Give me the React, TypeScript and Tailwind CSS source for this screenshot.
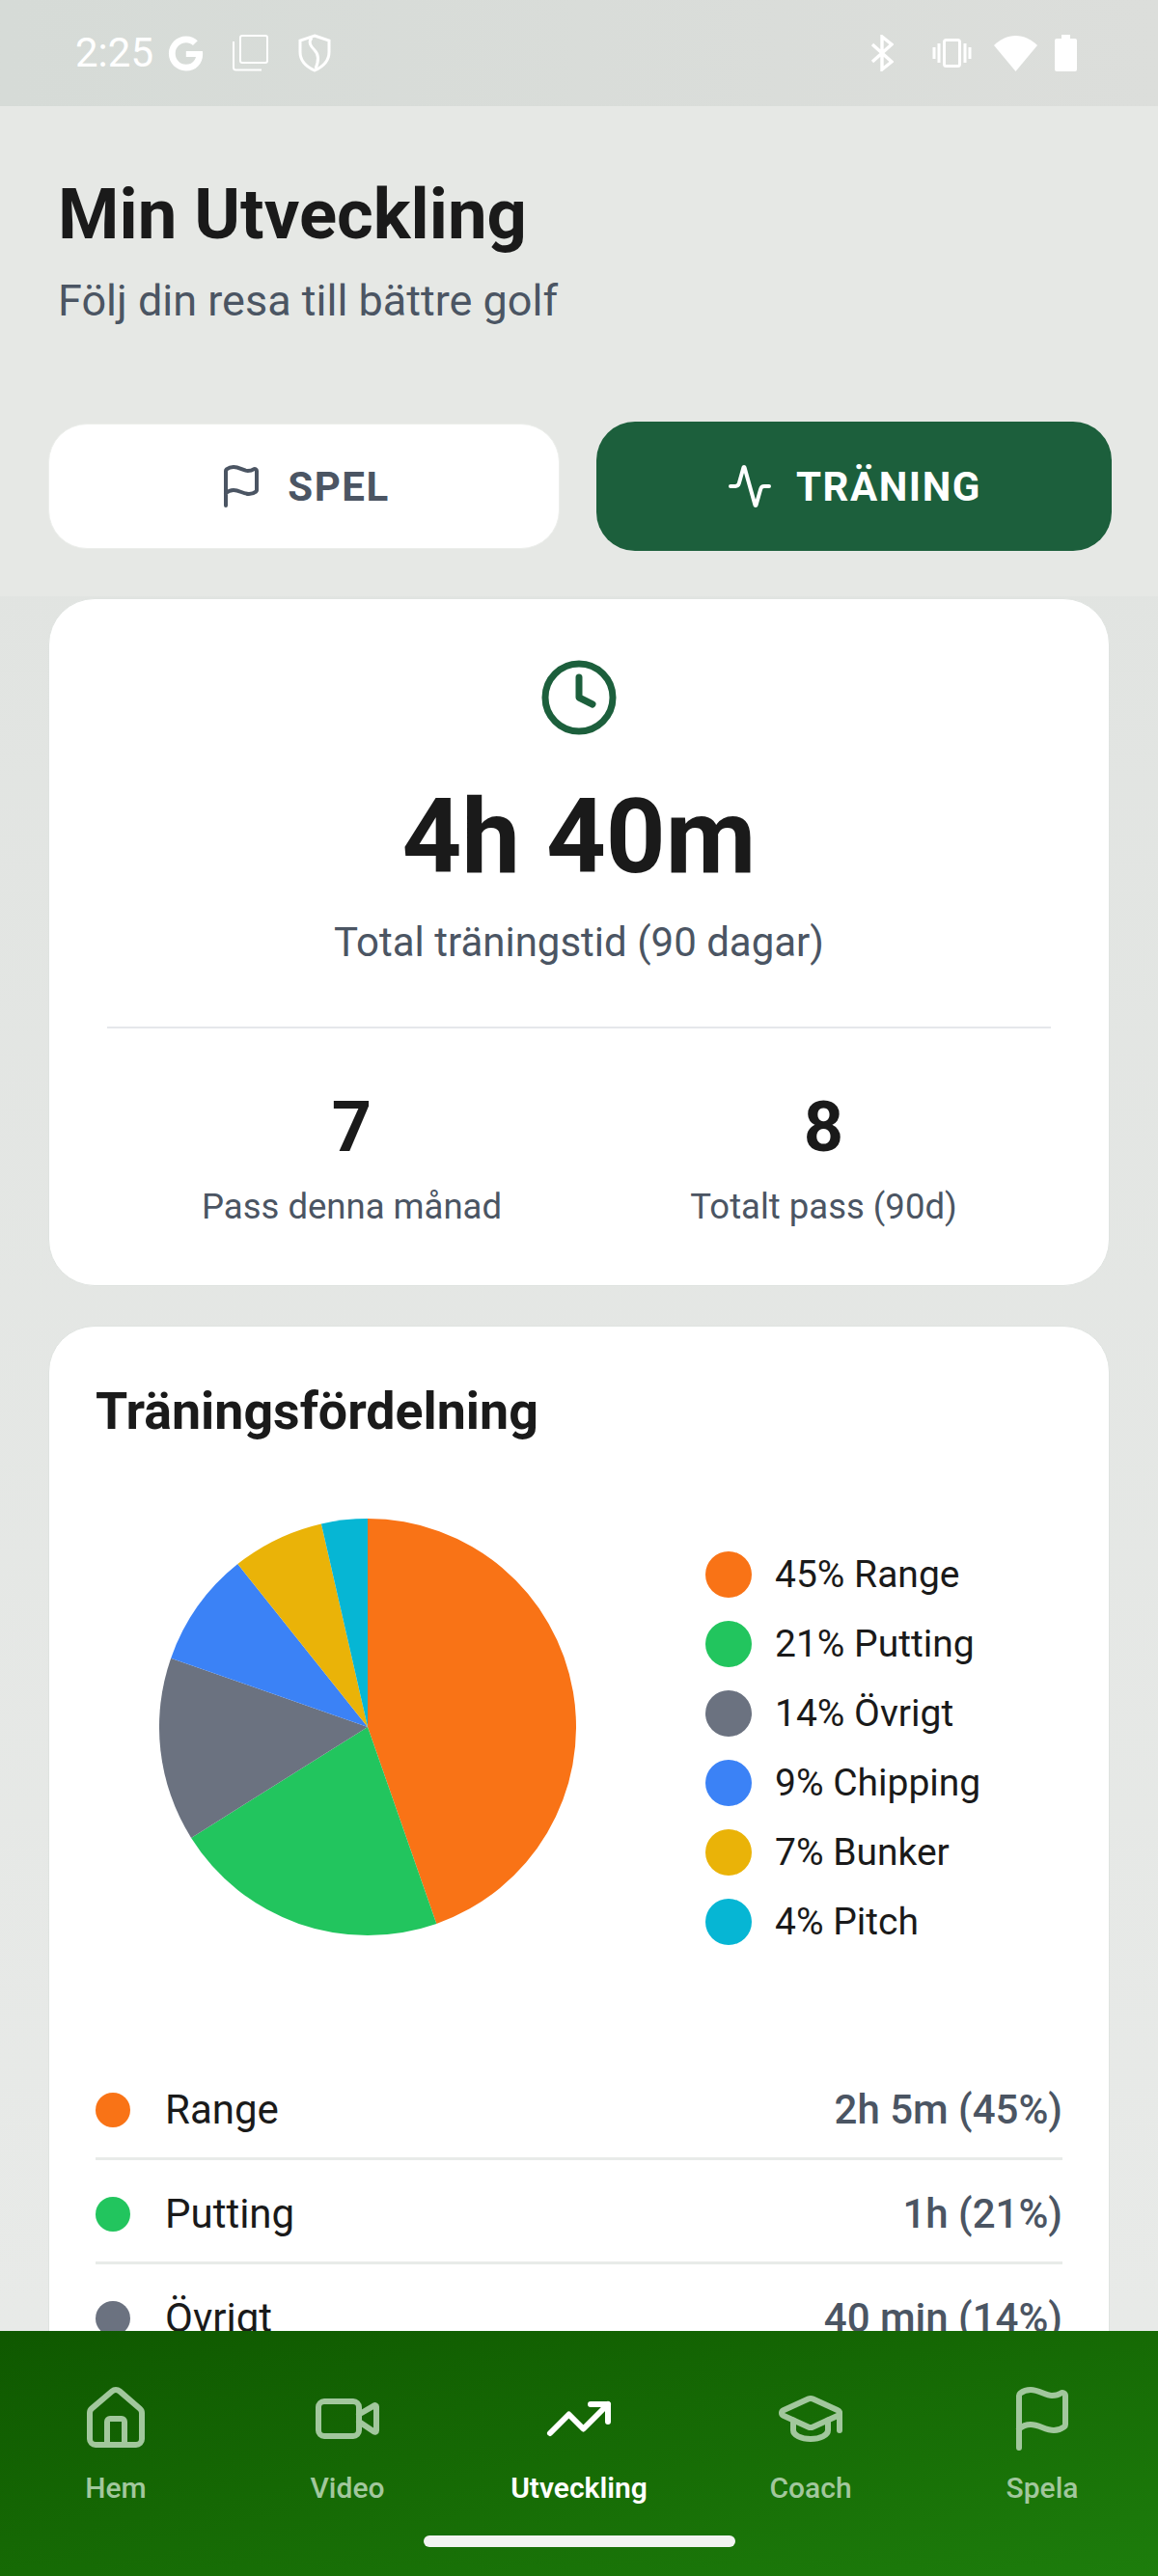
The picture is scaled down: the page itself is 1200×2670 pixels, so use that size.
import React from "react";
import { Flag, Activity, Clock, House, Video, TrendingUp, GraduationCap } from "lucide-react";
import { FaGoogle } from "react-icons/fa";

const SLICES = [
  { name: "Range", mins: 125, pct: 45, time: "2h 5m", color: "#f97316" },
  { name: "Putting", mins: 60, pct: 21, time: "1h", color: "#22c55e" },
  { name: "Övrigt", mins: 40, pct: 14, time: "40 min", color: "#6b7280" },
  { name: "Chipping", mins: 25, pct: 9, time: "25 min", color: "#3b82f6" },
  { name: "Bunker", mins: 20, pct: 7, time: "20 min", color: "#eab308" },
  { name: "Pitch", mins: 10, pct: 4, time: "10 min", color: "#06b6d4" },
];

const NAV = [
  { label: "Hem", icon: House },
  { label: "Video", icon: Video },
  { label: "Utveckling", icon: TrendingUp, active: true },
  { label: "Coach", icon: GraduationCap },
  { label: "Spela", icon: Flag },
];

function PieChart() {
  const total = SLICES.reduce((sum, s) => sum + s.mins, 0);
  let angle = 0;
  return (
    <svg width="432" height="432" viewBox="-216 -216 432 432">
      {SLICES.map((s) => {
        const start = angle;
        angle += (s.mins / total) * Math.PI * 2;
        const x1 = 216 * Math.sin(start);
        const y1 = -216 * Math.cos(start);
        const x2 = 216 * Math.sin(angle);
        const y2 = -216 * Math.cos(angle);
        const large = angle - start > Math.PI ? 1 : 0;
        return <path key={s.name} d={`M0 0L${x1} ${y1}A216 216 0 ${large} 1 ${x2} ${y2}Z`} fill={s.color} />;
      })}
    </svg>
  );
}

function StatusBar() {
  return (
    <div className="h-[110px] shrink-0 bg-gradient-to-r from-[#d6dbd7] to-[#dcdedb] flex items-center justify-between pl-[78px] pr-[84px] text-white">
      <div className="flex items-center">
        <span className="text-[42px] leading-none">2:25</span>
        <FaGoogle className="ml-[15px]" size={37} />
        <svg className="ml-[29px]" width="38" height="38" viewBox="0 0 38 38" fill="none" stroke="white" strokeWidth="2">
          <rect x="9" y="1" width="28" height="28" rx="2" />
          <path d="M2 7v27a2.500 2.500 0 0 0 2.500 2.500H31" />
        </svg>
        <svg className="ml-[31px]" width="34" height="40" viewBox="0 0 34 40" fill="none" stroke="white" strokeWidth="3">
          <path d="M17 2l15 5v12c0 9-6 15-15 19C8 34 2 28 2 19V7z" />
          <path d="M14 4c-4 5-1 9 3 13s5 10 1 19" />
        </svg>
      </div>
      <div className="flex items-center">
        <svg width="24" height="38" viewBox="0 0 24 38" fill="none" stroke="white" strokeWidth="3.400">
          <path d="M2 10l20 18-10 8V2l10 8L2 28" />
        </svg>
        <svg className="ml-[40px]" width="41" height="30" viewBox="0 0 41 30" fill="none" stroke="white" strokeWidth="3">
          <rect x="12.500" y="1.500" width="16" height="27" rx="2" />
          <path d="M7 5v20M2 9v12M34 5v20M39 9v12" />
        </svg>
        <svg className="ml-[23px]" width="45" height="37" viewBox="0 0 45 37" fill="white">
          <path d="M22.500 37L0 10C6 4 14 0 22.500 0S39 4 45 10z" />
        </svg>
        <svg className="ml-[18px]" width="23" height="38" viewBox="0 0 23 38" fill="white">
          <path d="M7 0h9v4h5a2 2 0 0 1 2 2v30a2 2 0 0 1-2 2H2a2 2 0 0 1-2-2V6a2 2 0 0 1 2-2h5z" />
        </svg>
      </div>
    </div>
  );
}

export default function App() {
  return (
    <div className="h-[2670px] w-[1200px] overflow-hidden flex flex-col bg-gradient-to-b from-[#dfe2df] to-[#e9ebe9] font-['Roboto',sans-serif]">
      <StatusBar />

      <div className="flex-1 min-h-0 overflow-hidden">
        {/* Header */}
        <div className="h-[508px] bg-[#e6e8e5] pt-[71px]">
          <div className="pl-[60px]">
            <h1 className="text-[72.500px] leading-[84px] font-bold text-[#1a1a1a]">Min Utveckling</h1>
            <p className="text-[45px] leading-[60px] text-[#4b5563] mt-[17px]">Följ din resa till bättre golf</p>
          </div>
          <div className="mt-[95px] pl-[50px] pr-[48px] flex items-center justify-between">
            <button className="w-[530px] h-[130px] bg-white border border-[#eceeeb] rounded-[40px] flex items-center justify-center gap-[24px] text-[#4b5563]">
              <Flag size={48} strokeWidth={2} />
              <span className="text-[42px] font-bold tracking-[1.500px]">SPEL</span>
            </button>
            <button className="w-[534px] h-[134px] bg-[#1c5f3c] rounded-[40px] flex items-center justify-center gap-[24px] text-white">
              <Activity size={48} strokeWidth={2} />
              <span className="text-[42px] font-bold tracking-[1.500px]">TRÄNING</span>
            </button>
          </div>
        </div>

        <div className="px-[50px] pt-[2px] flex flex-col gap-[41px]">
          {/* Total time */}
          <div className="h-[713px] bg-white rounded-[48px] border border-[#dfe3e0] flex flex-col items-center pt-[60px] px-[60px]">
            <Clock size={84} strokeWidth={2} className="text-[#1c5f3c]" />
            <div className="text-[108px] leading-[120px] font-bold text-[#1a1a1a] mt-[42px]">4h 40m</div>
            <div className="text-[42px] leading-[54px] text-[#4b5563] mt-[23px]">Total träningstid (90 dagar)</div>
            <div className="w-full h-[2px] bg-[#e5e7eb] mt-[60px]" />
            <div className="w-[978px] self-start ml-[9px] grid grid-cols-2 mt-[59px] text-center">
              <div>
                <div className="text-[72px] leading-[88px] font-bold text-[#1a1a1a]">7</div>
                <div className="text-[36.500px] leading-[44px] text-[#4b5563] mt-[16px]">Pass denna månad</div>
              </div>
              <div>
                <div className="text-[72px] leading-[88px] font-bold text-[#1a1a1a]">8</div>
                <div className="text-[36.500px] leading-[44px] text-[#4b5563] mt-[16px]">Totalt pass (90d)</div>
              </div>
            </div>
          </div>

          {/* Distribution */}
          <div className="bg-white rounded-[48px] border border-[#dfe3e0] px-[48px] pt-[53px] pb-[40px]">
            <h2 className="text-[53.700px] leading-[70px] font-bold text-[#1a1a1a]">Träningsfördelning</h2>
            <div className="flex items-center mt-[66px]">
              <div className="ml-[66px]">
                <PieChart />
              </div>
              <div className="ml-[134px] mt-[44px] flex flex-col gap-[24px]">
                {SLICES.map((s) => (
                  <div key={s.name} className="flex items-center gap-[24px] h-[48px]">
                    <span className="w-[48px] h-[48px] rounded-full" style={{ backgroundColor: s.color }} />
                    <span className="text-[39px] text-[#1a1a1a]">{s.pct}% {s.name}</span>
                  </div>
                ))}
              </div>
            </div>
            <div className="mt-[115px]">
              {SLICES.slice(0, 3).map((s) => (
                <div key={s.name} className="h-[108px] pt-[6px] flex items-center border-b-[3px] border-[#e8ebe9]">
                  <span className="w-[36px] h-[36px] rounded-full" style={{ backgroundColor: s.color }} />
                  <span className="ml-[36px] text-[42px] text-[#1a1a1a]">{s.name}</span>
                  <span className="ml-auto text-[42px] font-medium text-[#4b5563]">{s.time} ({s.pct}%)</span>
                </div>
              ))}
            </div>
          </div>
        </div>
      </div>

      {/* Bottom nav */}
      <div className="h-[254px] shrink-0 bg-gradient-to-br from-[#0f5800] to-[#1d7d0c] flex flex-col">
        <div className="grid grid-cols-5 pt-[55px]">
          {NAV.map((item) => (
            <div key={item.label} className={`flex flex-col items-center ${item.active ? "text-white" : "text-[#a2c79d]"}`}>
              <item.icon size={72} strokeWidth={2} />
              <span className={`text-[30px] leading-[36px] mt-[18px] ${item.active ? "font-semibold" : "font-medium"}`}>{item.label}</span>
            </div>
          ))}
        </div>
        <div className="mx-auto mt-[31px] w-[323px] h-[12px] rounded-full bg-[#f2f4f1]" />
      </div>
    </div>
  );
}
